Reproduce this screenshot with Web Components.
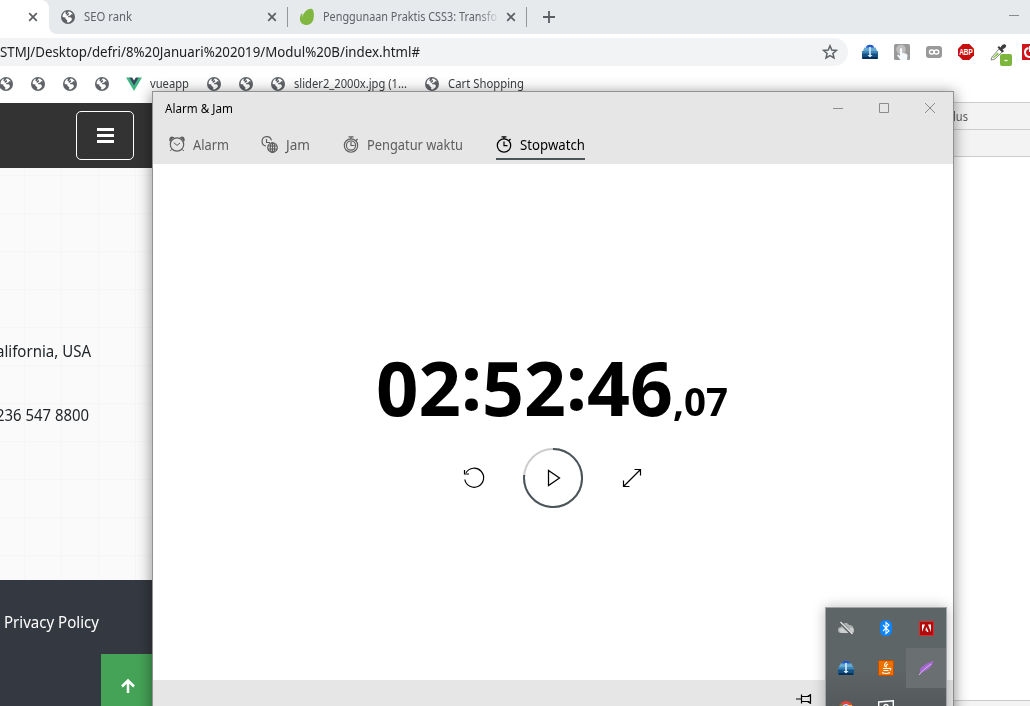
<!DOCTYPE html>
<html lang="id"><head><meta charset="utf-8"><title>Alarm &amp; Jam</title>
<style>
html,body{margin:0;height:100%;overflow:hidden;background:#fff;font-family:"Noto Sans","Open Sans",sans-serif}
</style></head><body><desk-top></desk-top>
<script>
const def=(name,css,html,ready)=>customElements.define(name,class extends HTMLElement{
  constructor(){super();this.attachShadow({mode:'open'}).innerHTML=`<style>:host{display:block;box-sizing:border-box}*{box-sizing:border-box}svg{display:block}${css}</style>${typeof html==='function'?html(this):html}`}
  connectedCallback(){ready&&ready(this)}
});
// One line of text condensed to a given width
def('fit-text',`:host{display:inline-block;flex:none;white-space:nowrap;line-height:20px}span{display:inline-block;transform-origin:0 50%}`,'<span><slot></slot></span>',el=>{
  const s=el.shadowRoot.querySelector('span'),w=+el.getAttribute('w');
  el.style.width=w+'px';s.style.transform=`scaleX(${w/s.getBoundingClientRect().width})`;
});
const icons={
globe:['0 0 14 14','<circle cx="7" cy="7" r="7" fill="#5f6368"/><path d="M7.500 1.500 9.200 1.700 12 4.300 10.300 4.200 9.200 5.600 7.300 6 7 7.200h2.600l1.400 1.500-.6 1.800-2.600 2L6 12.300l.3-2.100L4.600 8.900 4.300 7.600 1.600 7C1.400 4.500 3 2.300 4.800 1.600L4.300 3.800l1.500.5z" fill="#fff"/><path d="M5.300 4.800 7.500 2.800 8.200 4.500 6 6z" fill="#5f6368"/>'],
close:['0 0 10 10','<path d="M1.200 1.200 8.800 8.800M8.800 1.200 1.200 8.800" stroke="#5a5e62" stroke-width="1.700"/>'],
plus:['0 0 12 12','<path d="M6 0v12M0 6h12" stroke="#5a5e62" stroke-width="1.800"/>'],
leaf:['0 0 16 18','<path d="M13.200.9C15 2.500 15.300 7 14.500 11c-.8 3.800-3.800 6-7 6C4 17 1 14.500.9 11.200c0-2.500.7-4.500 2-5.700.4-.3.8 0 .7.500-.3 1.400-.3 2.600 0 3.700C3.900 5.300 8 0 13.200.9z" fill="#7fb741"/>'],
vue:['0 0 16 14','<path d="M0 .5h3.500L8 8.200 12.500.5H16L8 14z" fill="#41b883"/><path d="M3.200.5h3L8 3.500 9.800.5h3L8 8.800z" fill="#35495e"/>'],
star:['0 0 16 16','<path d="M8 1.800 9.800 6l4.600.4-3.500 3 1.100 4.500L8 11.500l-4 2.400 1.100-4.500-3.500-3L6.200 6z" fill="none" stroke="#5f6368" stroke-width="1.500"/>'],
box:['0 0 16 16','<path d="M4 4a4 3.300 0 0 1 8 0l1 1H3z" fill="#2459ce"/><path d="M2.500 3.500H13.500L15.500 8H.5z" fill="#66a8cf"/><path d="M0 7h16v8H0z" fill="#155184"/><path d="M0 7h16v2.500H0z" fill="#3c85b5"/><path d="M1 14h14" stroke="#082e56" stroke-width="2"/><path d="M7.200 3h1.600v8h1.700L8 13.500 5.500 11h1.700z" fill="#d7f1ff"/>'],
hand:['0 0 16 16','<rect width="16" height="16" rx="1.500" fill="#999"/><circle cx="7" cy="5.500" r="4.800" fill="#bfbfbf"/><path d="M6 4.500q1-1 2 0V9l4 .5 1.500 1.500-.5 5H6.500L3.200 11.500l1-1L6 12z" fill="#f5faff"/>'],
chain:['0 0 16 16','<rect y="2" width="16" height="12" rx="3" fill="#999"/><rect x="3.500" y="6" width="4.500" height="4" rx="2" fill="none" stroke="#fff" stroke-width="1.400"/><rect x="8.200" y="6" width="4.500" height="4" rx="2" fill="none" stroke="#fff" stroke-width="1.400"/>'],
abp:['0 0 16 16','<path d="M4.700 0h6.600L16 4.700v6.600L11.300 16H4.700L0 11.300V4.700z" fill="#c70d0d"/><text x="1.200" y="11" font-family="Liberation Sans,sans-serif" font-weight="bold" font-size="8.500" textLength="13.600" lengthAdjust="spacingAndGlyphs" fill="#fff">ABP</text>'],
dropper:['0 0 22 24','<path d="M2 14 9 6l3 3-7 7-4 1z" fill="#fff" stroke="#888"/><path d="m2.500 15 5-5.500L9 11l-5 4z" fill="#83c340"/><path d="m7.500 4.500 5 5 1.500-1.500-1.500-1.500C16 5 17 3 15.500 1.800S12 2 10.500 4.500L9 3z" fill="#3d3d3d"/><rect x="10" y="11" width="12" height="12" rx="2" fill="#7cb63c"/><path d="M14.500 17.500h3" stroke="#fff" stroke-width="1.300"/>'],
red:['0 0 16 16','<path d="M0 0h16v16H0z" fill="#cf141b"/><path d="M6.500 4A4.500 4.500 0 1 0 12 9M8 2v6" fill="none" stroke="#fff" stroke-width="2"/>'],
alarm:['0 0 16 16','<g fill="none" stroke="#5d5d5d"><circle cx="8" cy="8.500" r="6.700" stroke-width="1.200"/><path d="m4.800 6.700 3.200 2.700L11 7M2.500 13.500 1.200 15M13.500 13.500l1.300 1.500"/></g><path d="M.6 5.300C-.3 3 .8.900 3 .6l2.500.9C3.700 2.200 2 3.500 1.500 5.500zM15.400 5.300C16.300 3 15.200.9 13 .6l-2.500.9c1.800.7 3.500 2 4 4z" fill="#5d5d5d"/>'],
jam:['0 0 17 17','<g fill="none" stroke="#5d5d5d" stroke-width="1.150"><path d="M5 10A4.700 4.700 0 1 1 10.400 4.500M5.500 3v3.500H9"/><circle cx="11.500" cy="11.500" r="4.800"/><ellipse cx="11.500" cy="11.500" rx="2.200" ry="4.800"/><path d="M7 10h9M7 13h9M11.500 7v9"/></g>'],
timer:['0 0 16 17','<g fill="none" stroke="#5d5d5d" stroke-width="1.150"><circle cx="8" cy="9.500" r="6.700"/><circle cx="8" cy="9.500" r="4.600"/><path d="M8 6v3.500h3.500M8 3V1M5.500.8h5M13 4.500 14.500 3"/></g>'],
watch:['0 0 16 17','<g fill="none" stroke="#000" stroke-width="1.250"><circle cx="8" cy="9.500" r="6.700"/><path d="M8 5.500v4h3.500M8 3V1M5.500.8h5M13 4.500 14.500 3"/></g>'],
bars:['0 0 17 15','<path d="M0 1.500h17M0 7.500h17M0 13.500h17" stroke="#fff" stroke-width="3"/>'],
up:['0 0 16 16','<path d="M8 15V2.500M2 8.500l6-6 6 6" fill="none" stroke="#fff" stroke-width="2.500"/>'],
reset:['0 0 22 22','<path d="M1.800 12.500a9.500 9.500 0 1 0 1.200-6.700M1.500 3v4h4.500" fill="none" stroke="#000" stroke-width="1.200"/>'],
ring:['0 0 60 60','<g fill="none" stroke-width="2"><circle cx="30" cy="30" r="29" stroke="#ccc"/><path d="M30 1A29 29 0 1 1 1.200 27" stroke="#4a5459"/><path d="M25.500 22.500v15L36.500 30z" stroke="#000" stroke-width="1.250"/></g>'],
expand:['0 0 20 20','<path d="M1.500 18.500l17-17M12.500 1.500h6v6M1.500 12.500v6h6" fill="none" stroke="#000" stroke-width="1.200"/>'],
min:['0 0 10 10','<path d="M0 5.500h10" stroke="#8b8b8b"/>'],
max:['0 0 10 10','<path d="M.5.5h9v9h-9z" fill="none" stroke="#8b8b8b"/>'],
x:['0 0 10 10','<path d="m0 0 10 10M10 0 0 10" stroke="#8b8b8b"/>'],
pin:['0 0 16 10','<path d="M0 5h5.500M5.500.5v9M5.500 2.500h8M5.500 7.500h8M11.500 2.500l3-1.800v8.600l-3-1.800" fill="none" stroke="#000" stroke-width="1.200"/>'],
cloud:['0 0 17 16','<path d="M3 13a3 3 0 0 1 0-6C4 3 9 1.500 11 5c4-.5 6 4 4 8z" fill="#aeb1b1"/><path d="M3 13h12q1.500-2.500 0-5Q10 8 8 11L5 8Q2 8 1 10z" fill="#cfd0d0"/><path d="m2 2 12 12.500" stroke="#5c6163" stroke-width="3"/><path d="m2.500 2 12 12" stroke="#eee" stroke-width="1.100"/>'],
bt:['0 0 12 16','<rect width="12" height="16" rx="5.500" fill="#0a84ff"/><path d="m3 5 6 6-3 2.500v-11L9 5l-6 6" fill="none" stroke="#fff" stroke-width="1.100"/>'],
adobe:['0 0 15 15','<path d="M0 0h15v15H0z" fill="#b30b0b"/><path d="M.5.5h14v14H.5z" fill="none" stroke="#c33"/><path d="M3 3.500h3L3 11zM9 3.500h3V11zM7.500 6l2 5H8L7.500 9.500H6.200z" fill="#fff"/>'],
java:['0 0 16 16','<rect x=".5" y=".5" width="15" height="15" rx="1" fill="#ec7200" stroke="#c04d05"/><path d="M9 2Q5 4.500 7.500 7M10 4Q7 5.500 8.500 7.500M5 8.500h6M11 8.500q3-.5 1 2M5.500 10.500h5M4 12.500q4 2 8 0" fill="none" stroke="#fff" stroke-width="1.100"/>'],
feather:['0 0 16 16','<path d="M2 12C1 7 7 5 10 3L15.500.8C15 5 11 11 4 12L.8 15.500z" fill="#a568ce"/><path d="m1 15 5-5.500L13 4" fill="none" stroke="#dbb5ef"/>'],
chrome:['0 0 16 16','<circle cx="8" cy="8" r="7" fill="#e0443a"/><path d="M8 8 3 4Q0 8 3 14z" fill="#3ba15a"/><path d="M8 5h6v5H8z" fill="#f6c53b"/><circle cx="8" cy="8" r="3.400" fill="#4687ed" stroke="#fff"/>'],
net:['0 0 16 16','<path d="M.7 2 15.300.7V12H.7z" fill="none" stroke="#fff" stroke-width="1.400"/><path d="M6 9V5.500q2-2 4 0V7H6" fill="none" stroke="#fff" stroke-width="1.300"/>']
};
def('ui-icon',':host{flex:none}svg{width:100%;height:100%}',el=>{const i=icons[el.getAttribute('n')];return `<svg viewBox="${i[0]}">${i[1]}</svg>`},el=>{el.style.width=el.getAttribute('w')+'px';el.style.height=(el.getAttribute('h')||el.getAttribute('w'))+'px'});

def('tab-strip',`:host{height:34px;background:#e6eaed;display:flex;align-items:center;color:#5f6368;font-size:12px}
.a{width:49px;flex:none;height:34px;background:#fff;border-radius:0 8px 0 0;padding:12px 0 0 28px}.t{height:34px;display:flex;align-items:center;border-bottom-left-radius:8px}
.under{background:#fff;height:34px;width:238px;flex:none}.under>.t{background:#e6eaed;padding-left:12px}i{width:1px;height:20px;background:#929699;flex:none}.m{margin-left:auto;padding-right:11px}
.fade{-webkit-mask-image:linear-gradient(90deg,#000 155px,transparent 177px)}`,
`<div class="a"><ui-icon n="close" w="10"></ui-icon></div><div class="under"><div class="t"><ui-icon n="globe" w="14"></ui-icon><fit-text w="48" style="margin:0 135px 0 9px">SEO rank</fit-text><ui-icon n="close" w="10"></ui-icon></div></div><i style="margin-right:11px"></i><ui-icon n="leaf" w="16" h="18"></ui-icon><fit-text class="fade" w="174" style="margin:0 9px 0 8px">Penggunaan Praktis CSS3: Transfo</fit-text><ui-icon n="close" w="10"></ui-icon><i style="margin:0 16px 0 10px"></i><ui-icon n="plus" w="12"></ui-icon><svg class="m" width="21" height="10" style="margin-bottom:5px"><path d="M0 5.500h10" stroke="#8b8b8b"/></svg>`);
def('address-bar',`:host{height:36px;padding-top:4px;display:flex;align-items:flex-start}
.p{width:848px;height:28px;background:#f1f3f4;border-radius:0 14px 14px 0;display:flex;align-items:center;justify-content:space-between;padding-right:10px;font-size:14px;color:#202124;flex:none}
.e{display:flex;gap:16px;padding:6px 0 0 14px}`,
`<div class="p"><fit-text w="420">STMJ/Desktop/defri/8%20Januari%202019/Modul%20B/index.html#</fit-text><ui-icon n="star" w="16"></ui-icon></div><div class="e"><ui-icon n="box" w="16"></ui-icon><ui-icon n="hand" w="16"></ui-icon><ui-icon n="chain" w="16"></ui-icon><ui-icon n="abp" w="16"></ui-icon><ui-icon n="dropper" w="22" h="24" style="margin-top:-1px"></ui-icon><ui-icon n="red" w="16" style="margin-left:-6px"></ui-icon></div>`);
def('bookmark-bar',`:host{height:33px;padding-bottom:5px;display:flex;align-items:center;font-size:12px;color:#3c4043;overflow:hidden}ui-icon{margin-right:18px}.l{margin-right:9px}`,
`<ui-icon n="globe" w="14" style="margin-left:-1px"></ui-icon><ui-icon n="globe" w="14"></ui-icon><ui-icon n="globe" w="14"></ui-icon><ui-icon n="globe" w="14" style="margin-right:17px"></ui-icon><ui-icon n="vue" w="16" h="14" style="margin-right:8px"></ui-icon><fit-text w="39" style="margin-right:18px">vueapp</fit-text><ui-icon n="globe" w="14"></ui-icon><ui-icon n="globe" w="14"></ui-icon><ui-icon class="l" n="globe" w="14"></ui-icon><fit-text w="113" style="margin-right:18px">slider2_2000x.jpg (1...</fit-text><ui-icon class="l" n="globe" w="14"></ui-icon><fit-text w="76">Cart Shopping</fit-text>`);
def('web-page',`:host{flex:none;width:153px;display:flex;flex-direction:column;font-size:16px;color:#212529}
header{height:65px;background:#333;padding:8px 0 0 76px}.b{width:58px;height:49px;border:1px solid #fff;border-radius:5px;display:grid;place-items:center}
main{height:412px;background:repeating-linear-gradient(90deg,transparent 0 24px,#f6f6f6 24px 25px,transparent 25px 37px) 0 0,repeating-linear-gradient(0deg,transparent 0 24px,#f6f6f6 24px 25px,transparent 25px 38px),#fafafa;overflow:hidden;padding-top:173px}
main div{height:64px}fit-text{display:block}
footer{flex:1;background:#343840;color:#fff;padding:32px 0 0 4px;display:flex;flex-direction:column}.u{width:52px;height:52px;background:#45a357;margin:auto 0 0 auto;padding:24px 0 0 19px}`,
`<header><div class="b"><ui-icon n="bars" w="17" h="15"></ui-icon></div></header><main><div><fit-text w="95" style="margin-left:-4px">alifornia, USA</fit-text></div><div><fit-text w="93" style="margin-left:-4px">236 547 8800</fit-text></div></main><footer><fit-text w="95">Privacy Policy</fit-text><div class="u"><ui-icon n="up" w="16"></ui-icon></div></footer>`);
def('dev-panel',`:host{width:77px;height:604px;margin-top:-1px;border-top:1px solid #ccc;font-size:12px;color:#5a5a5a;display:flex;flex-direction:column}
div{height:27px;background:#f3f3f3;border-bottom:1px solid #ccc;padding-top:4px}p{flex:1;margin:0}div:last-child{height:6px;border-top:1px solid #ccc;border-bottom:0;padding:0}`,`<div><fit-text w="15">lus</fit-text></div><div></div><p></p><div></div>`);
def('browser-window',`:host{height:100%;display:flex;flex-direction:column}.c{flex:1;display:flex;justify-content:space-between}`,
`<tab-strip></tab-strip><address-bar></address-bar><bookmark-bar></bookmark-bar><div class="c"><web-page></web-page><dev-panel></dev-panel></div>`);
def('nav-tab',`:host{display:flex;align-items:flex-start;height:24px;border-bottom:2px solid transparent;font-size:14px;color:#5d5d5d;gap:8px}:host([on]){color:#000;border-color:#4a5459}`,'<slot></slot>');
def('alarm-window',`:host{position:absolute;left:152px;top:91px;width:802px;height:640px;background:#fff;border:1px solid #929292;box-shadow:0 2px 13px 1px #0006;display:flex;flex-direction:column}
header{height:72px;background:#e6e6e6;flex:none}.t{height:34px;display:flex;align-items:center;padding:0 18px 2px 12px;font-size:12px;color:#000}.t fit-text{padding-top:1px}.t ui-icon{margin-left:36px}.t ui-icon:first-of-type{margin-left:auto}
nav{display:flex;padding:10px 0 0 16px}nav fit-text{margin-top:-1px}
main{height:516px;flex:none;display:flex;flex-direction:column}.n{height:96px;margin:175px 0 0 223px;display:flex;align-items:baseline;font-weight:700;font-size:75px;line-height:96px;color:#000}
.n fit-text{line-height:96px}.k{position:relative;top:-6px}.s{font-size:39px}
.r{display:flex;align-items:center;margin:13px 0 0 310px}footer{flex:1;background:#e6e6e6;padding:14px 0 0 643px}`,
`<header><div class="t"><fit-text w="68">Alarm &amp; Jam</fit-text><ui-icon n="min" w="10"></ui-icon><ui-icon n="max" w="10"></ui-icon><ui-icon n="x" w="10"></ui-icon></div>
<nav><nav-tab><ui-icon n="alarm" w="16"></ui-icon><fit-text w="36">Alarm</fit-text></nav-tab><nav-tab style="margin-left:32px"><ui-icon n="jam" w="17"></ui-icon><fit-text w="24">Jam</fit-text></nav-tab><nav-tab style="margin-left:33px"><ui-icon n="timer" w="16" h="17"></ui-icon><fit-text w="96">Pengatur waktu</fit-text></nav-tab><nav-tab on style="margin-left:33px"><ui-icon n="watch" w="16" h="17"></ui-icon><fit-text w="65">Stopwatch</fit-text></nav-tab></nav></header>
<main><div class="n"><fit-text w="85">02</fit-text><fit-text class="k" w="21">:</fit-text><fit-text w="84">52</fit-text><fit-text class="k" w="21">:</fit-text><fit-text w="86">46</fit-text><fit-text class="s" w="55">,07</fit-text></div>
<div class="r"><ui-icon n="reset" w="22"></ui-icon><ui-icon n="ring" w="60" style="margin:0 39px 0 38px"></ui-icon><ui-icon n="expand" w="20"></ui-icon></div></main><footer><ui-icon n="pin" w="16" h="10"></ui-icon></footer>`);
def('tray-menu',`:host{position:absolute;left:825px;top:607px;width:122px;height:124px;border:1px solid #a0a3a4;background:linear-gradient(#5e6567 0 60px,#54595b 100px);box-shadow:0 0 12px #0004;display:grid;grid-template-columns:repeat(3,40px);grid-auto-rows:40px}
div{display:grid;place-items:center}.on{background:#6a6f71}`,
`<div><ui-icon n="cloud" w="17" h="16"></ui-icon></div><div><ui-icon n="bt" w="12" h="16"></ui-icon></div><div><ui-icon n="adobe" w="15"></ui-icon></div><div><ui-icon n="box" w="16"></ui-icon></div><div><ui-icon n="java" w="16"></ui-icon></div><div class="on"><ui-icon n="feather" w="16"></ui-icon></div><div><ui-icon n="chrome" w="16"></ui-icon></div><div><ui-icon n="net" w="16"></ui-icon></div>`);
def('desk-top',':host{position:relative;width:1030px;height:706px;overflow:hidden}','<browser-window></browser-window><alarm-window></alarm-window><tray-menu></tray-menu>');
</script></body></html>
